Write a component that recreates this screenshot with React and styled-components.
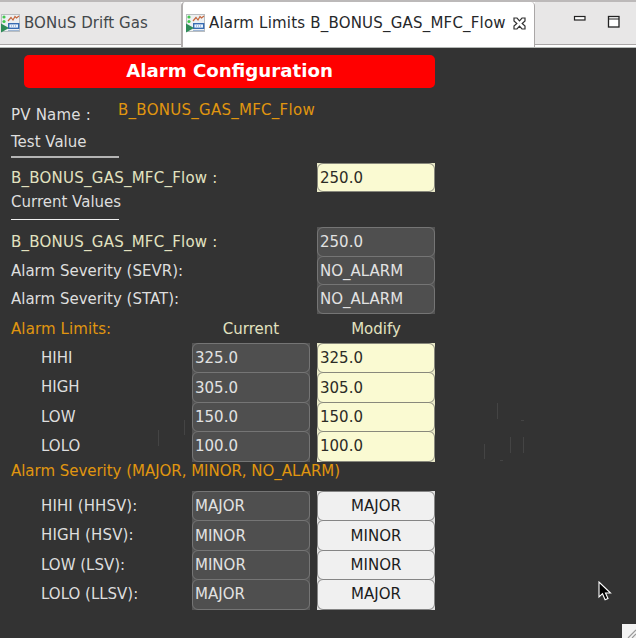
import React from "react";
import styled, { createGlobalStyle } from "styled-components";

const Global = createGlobalStyle`
  * { box-sizing: border-box; }
  html, body { margin: 0; background: #333; overflow: hidden; }
`;

const Window = styled.div`
  position: relative;
  width: 636px;
  height: 638px;
  overflow: hidden;
  display: flex;
  flex-direction: column;
  background: #333333;
  font-family: "DejaVu Sans", sans-serif;
  font-size: 15px;
  white-space: nowrap;
`;

const TabBar = styled.header`
  height: 48px;
  flex: none;
  display: flex;
  align-items: flex-start;
  background: #fff;
  border-top: 2px solid #bcb9b9;
  border-bottom: 1px solid #b4b8b5;
`;

const Tab = styled.div`
  display: flex;
  align-items: flex-start;
  width: ${(p) => p.$width}px;
  height: ${(p) => (p.$active ? 45 : 43)}px;
  padding: 0 0 0 ${(p) => (p.$active ? 2 : 0)}px;
  gap: 5px;
  color: ${(p) => (p.$active ? "#26282a" : "#43484b")};
  background: ${(p) => (p.$active ? "#fff" : "#e8e7e7")};
  border-bottom: ${(p) => (p.$active ? "0" : "1px solid #aaa7a7")};
  border-left: ${(p) => (p.$active ? "2px solid #b1aeae" : "0")};
  border-right: ${(p) => (p.$active ? "1px solid #aaa7a7" : "0")};
  border-radius: ${(p) => (p.$active ? "4px 4px 0 0" : "0")};
  svg { flex: none; }
`;

const TabLabel = styled.span`
  height: 42px;
  line-height: 43px;
  margin-left: -1px;
  letter-spacing: ${(p) => p.$track || 0}px;
`;

const TabIcon = styled.span`
  display: flex;
  height: 42px;
  align-items: center;
`;

const WindowTools = styled.div`
  flex: 1;
  height: 43px;
  background: #e8e7e7;
  border-bottom: 1px solid #aaa7a7;
  display: flex;
  padding: 13px 0 0 38px;
  gap: 20px;
`;

const Panel = styled.main`
  flex: 1;
  display: flex;
  flex-direction: column;
  padding-left: 11px;
  padding-top: 7px;
`;

const Banner = styled.h1`
  margin: 0 0 0 13px;
  width: 411px;
  height: 33px;
  flex: none;
  border-radius: 5px;
  background: #ff0000;
  color: #fff;
  font-size: 18.2px;
  line-height: 32px;
  text-align: center;
`;

const tones = {
  plain: "#dedede",
  cream: "#e2e2c0",
  orange: "#e0960f",
};

const Row = styled.div`
  flex: none;
  display: grid;
  grid-template-columns: 181px 118px 118px;
  height: ${(p) => p.$h}px;
  line-height: ${(p) => p.$h}px;
  & > :nth-child(3) { margin-left: 7px; width: 118px; }
`;

const Label = styled.span`
  color: ${(p) => tones[p.$tone || "plain"]};
  padding-top: 1px;
  padding-left: ${(p) => (p.$indent ? 30 : 0)}px;
  letter-spacing: ${(p) => p.$track || 0}px;
`;

const ColumnHead = styled(Label)`
  text-align: center;
`;

const PvRow = styled.div`
  flex: none;
  height: 40px;
  display: flex;
  padding-top: 7px;
`;

const PvName = styled(Label)`
  width: 107px;
  line-height: 38px;
`;

const PvValue = styled(Label)`
  padding-top: 0;
  line-height: 30px;
`;

const Heading = styled.h2`
  flex: none;
  margin: 0;
  width: 108px;
  height: ${(p) => p.$h}px;
  font-size: inherit;
  font-weight: normal;
  line-height: ${(p) => p.$line}px;
  color: #dedede;
  border-bottom: ${(p) => p.$rule}px solid ${(p) => (p.$rule > 1 ? "#b4b4b4" : "#eeeeee")};
`;

const Spacer = styled.div`
  flex: none;
  height: ${(p) => p.$h}px;
`;

const fieldKinds = {
  read: { fill: "#4f4f4f", text: "#e2e2e2", edge: "#757575", corner: "#545454", align: "left" },
  edit: { fill: "#fafad2", text: "#2c2c26", edge: "#88887c", corner: "#e8e8c6", align: "left" },
  button: { fill: "#f0f0f0", text: "#1c1c1c", edge: "#858585", corner: "#dedede", align: "center" },
};

const FieldBox = styled.div`
  height: 100%;
  background: ${(p) => fieldKinds[p.$kind].corner};
`;

const FieldFrame = styled.div`
  display: flex;
  align-items: center;
  justify-content: ${(p) => fieldKinds[p.$kind].align};
  height: 100%;
  padding: 0 0 0 ${(p) => (p.$kind === "button" ? 0 : 2)}px;
  line-height: 26px;
  border: 1px solid ${(p) => fieldKinds[p.$kind].edge};
  border-radius: 6px;
  background: ${(p) => fieldKinds[p.$kind].fill};
  color: ${(p) => fieldKinds[p.$kind].text};
`;

const Field = ({ kind = "read", children }) => (
  <FieldBox $kind={kind}>
    <FieldFrame $kind={kind}>{children}</FieldFrame>
  </FieldBox>
);

const Pointer = styled.svg`
  position: absolute;
  left: 598px;
  top: 581px;
`;

const ResizeGrip = styled.svg`
  position: absolute;
  right: 0;
  bottom: 0;
`;

const Scratches = styled.svg`
  position: absolute;
  left: 0;
  top: 400px;
`;

const DisplayIcon = () => (
  <svg width="20" height="20" viewBox="0 0 20 20">
    <rect x="1.5" y="1.5" width="18" height="17" fill="#edf0f2" stroke="#b9bdc0" />
    <path d="M8 8 11 4.5 13 7 15 3.500 16.500 5 19 3" fill="none" stroke="#c5673e" strokeWidth="1.2" />
    <circle cx="4" cy="4" r="1.6" fill="#42c84e" />
    <circle cx="4" cy="8.5" r="1.6" fill="#42c84e" />
    <rect x="8.700" y="10.700" width="10" height="4.600" fill="#e9f3ff" stroke="#376bb2" strokeWidth="1.4" />
    <path d="M11 13h6" stroke="#7a98be" strokeDasharray="1 1" />
    <path d="M8 17.500h11" stroke="#9eb5d2" />
    <path d="M1 10.500 9 15 1 19.500z" fill="#2e8b57" />
  </svg>
);

const CloseIcon = () => (
  <svg width="16" height="13" viewBox="-2 0 16 13">
    <path d="M1 1h3l2.5 2.8L9 1h3v3L9.2 6.5 12 9v3H9L6.500 9.200 4 12H1V9l2.800-2.500L1 4z" fill="#fff" stroke="#303030" strokeWidth="1.2" />
  </svg>
);

const limits = [
  ["HIHI", "325.0"],
  ["HIGH", "305.0"],
  ["LOW", "150.0"],
  ["LOLO", "100.0"],
];

const severities = [
  ["HIHI (HHSV):", "MAJOR", 0.1],
  ["HIGH (HSV):", "MINOR", 0.14],
  ["LOW (LSV):", "MINOR", 0],
  ["LOLO (LLSV):", "MAJOR", 0],
];

export default function App() {
  return (
    <Window>
      <Global />
      <TabBar>
        <Tab $width={181}>
          <TabIcon><DisplayIcon /></TabIcon>
          <TabLabel $track={0.06}>BONuS Drift Gas</TabLabel>
        </Tab>
        <Tab $active $width={354}>
          <TabIcon><DisplayIcon /></TabIcon>
          <TabLabel $track={0.2}>Alarm Limits B_BONUS_GAS_MFC_Flow</TabLabel>
          <TabIcon><CloseIcon /></TabIcon>
        </Tab>
        <WindowTools>
          <svg width="14" height="15" viewBox="0 0 14 15">
            <rect x="1.5" y="1.5" width="10.500" height="3.500" fill="#fff" stroke="#222" strokeWidth="1.2" />
          </svg>
          <svg width="13" height="15" viewBox="0 0 13 15">
            <rect x="1.500" y="1.500" width="10.500" height="10.500" fill="#fff" stroke="#222" strokeWidth="1.3" />
            <path d="M1 4h11" stroke="#222" />
          </svg>
        </WindowTools>
      </TabBar>
      <Panel>
        <Banner>Alarm Configuration</Banner>
        <PvRow>
          <PvName $track={0.2}>PV Name :</PvName>
          <PvValue $tone="orange" $track={0.27}>B_BONUS_GAS_MFC_Flow</PvValue>
        </PvRow>
        <Heading $h={30} $line={28} $rule={2}>Test Value</Heading>
        <Spacer $h={5} />
        <Row $h={28}>
          <Label $tone="cream" $track={0.24}>B_BONUS_GAS_MFC_Flow :</Label>
          <span />
          <Field kind="edit">250.0</Field>
        </Row>
        <Heading $h={29} $line={22} $rule={1}>Current Values</Heading>
        <Spacer $h={7} />
        <Row $h={29}>
          <Label $tone="cream" $track={0.24}>B_BONUS_GAS_MFC_Flow :</Label>
          <span />
          <Field>250.0</Field>
        </Row>
        <Row $h={28}>
          <Label>Alarm Severity (SEVR):</Label>
          <span />
          <Field>NO_ALARM</Field>
        </Row>
        <Row $h={29}>
          <Label>Alarm Severity (STAT):</Label>
          <span />
          <Field>NO_ALARM</Field>
        </Row>
        <Row $h={30}>
          <Label $tone="orange" $track={0.1}>Alarm Limits:</Label>
          <ColumnHead $tone="cream">Current</ColumnHead>
          <ColumnHead $tone="cream">Modify</ColumnHead>
        </Row>
        {limits.map(([name, value]) => (
          <Row key={name} $h={29.4}>
            <Label $indent>{name}</Label>
            <Field>{value}</Field>
            <Field kind="edit">{value}</Field>
          </Row>
        ))}
        <Row $h={18}>
          <Label $tone="orange" $track={-0.03}>Alarm Severity (MAJOR, MINOR, NO_ALARM)</Label>
        </Row>
        <Spacer $h={12.4} />
        {severities.map(([name, value, track]) => (
          <Row key={name} $h={29.4}>
            <Label $indent $track={track}>{name}</Label>
            <Field>{value}</Field>
            <Field kind="button">{value}</Field>
          </Row>
        ))}
      </Panel>
      <Scratches width="560" height="65" viewBox="0 400 560 65">
        <path d="M158.500 430v16M184.500 420v15M484.500 444v15M497.500 403v16M510.500 437v16M523.500 437v16M521 420.500h3M500 460.500h3" stroke="#444" fill="none" />
      </Scratches>
      <Pointer width="14" height="21" viewBox="0 0 14 21">
        <path d="M1 1v15l3.500-3.300 2.600 6 2.900-1.300-2.500-5.400H12.500z" fill="#000" stroke="#fff" strokeWidth="1.100" />
      </Pointer>
      <ResizeGrip width="14" height="14" viewBox="0 0 14 14">
        <path d="M0 0h14v14H0z" fill="#f3f3f3" />
        <path d="M6 14 14 6M10 14l4-4" stroke="#999" strokeWidth="1.200" />
      </ResizeGrip>
    </Window>
  );
}
